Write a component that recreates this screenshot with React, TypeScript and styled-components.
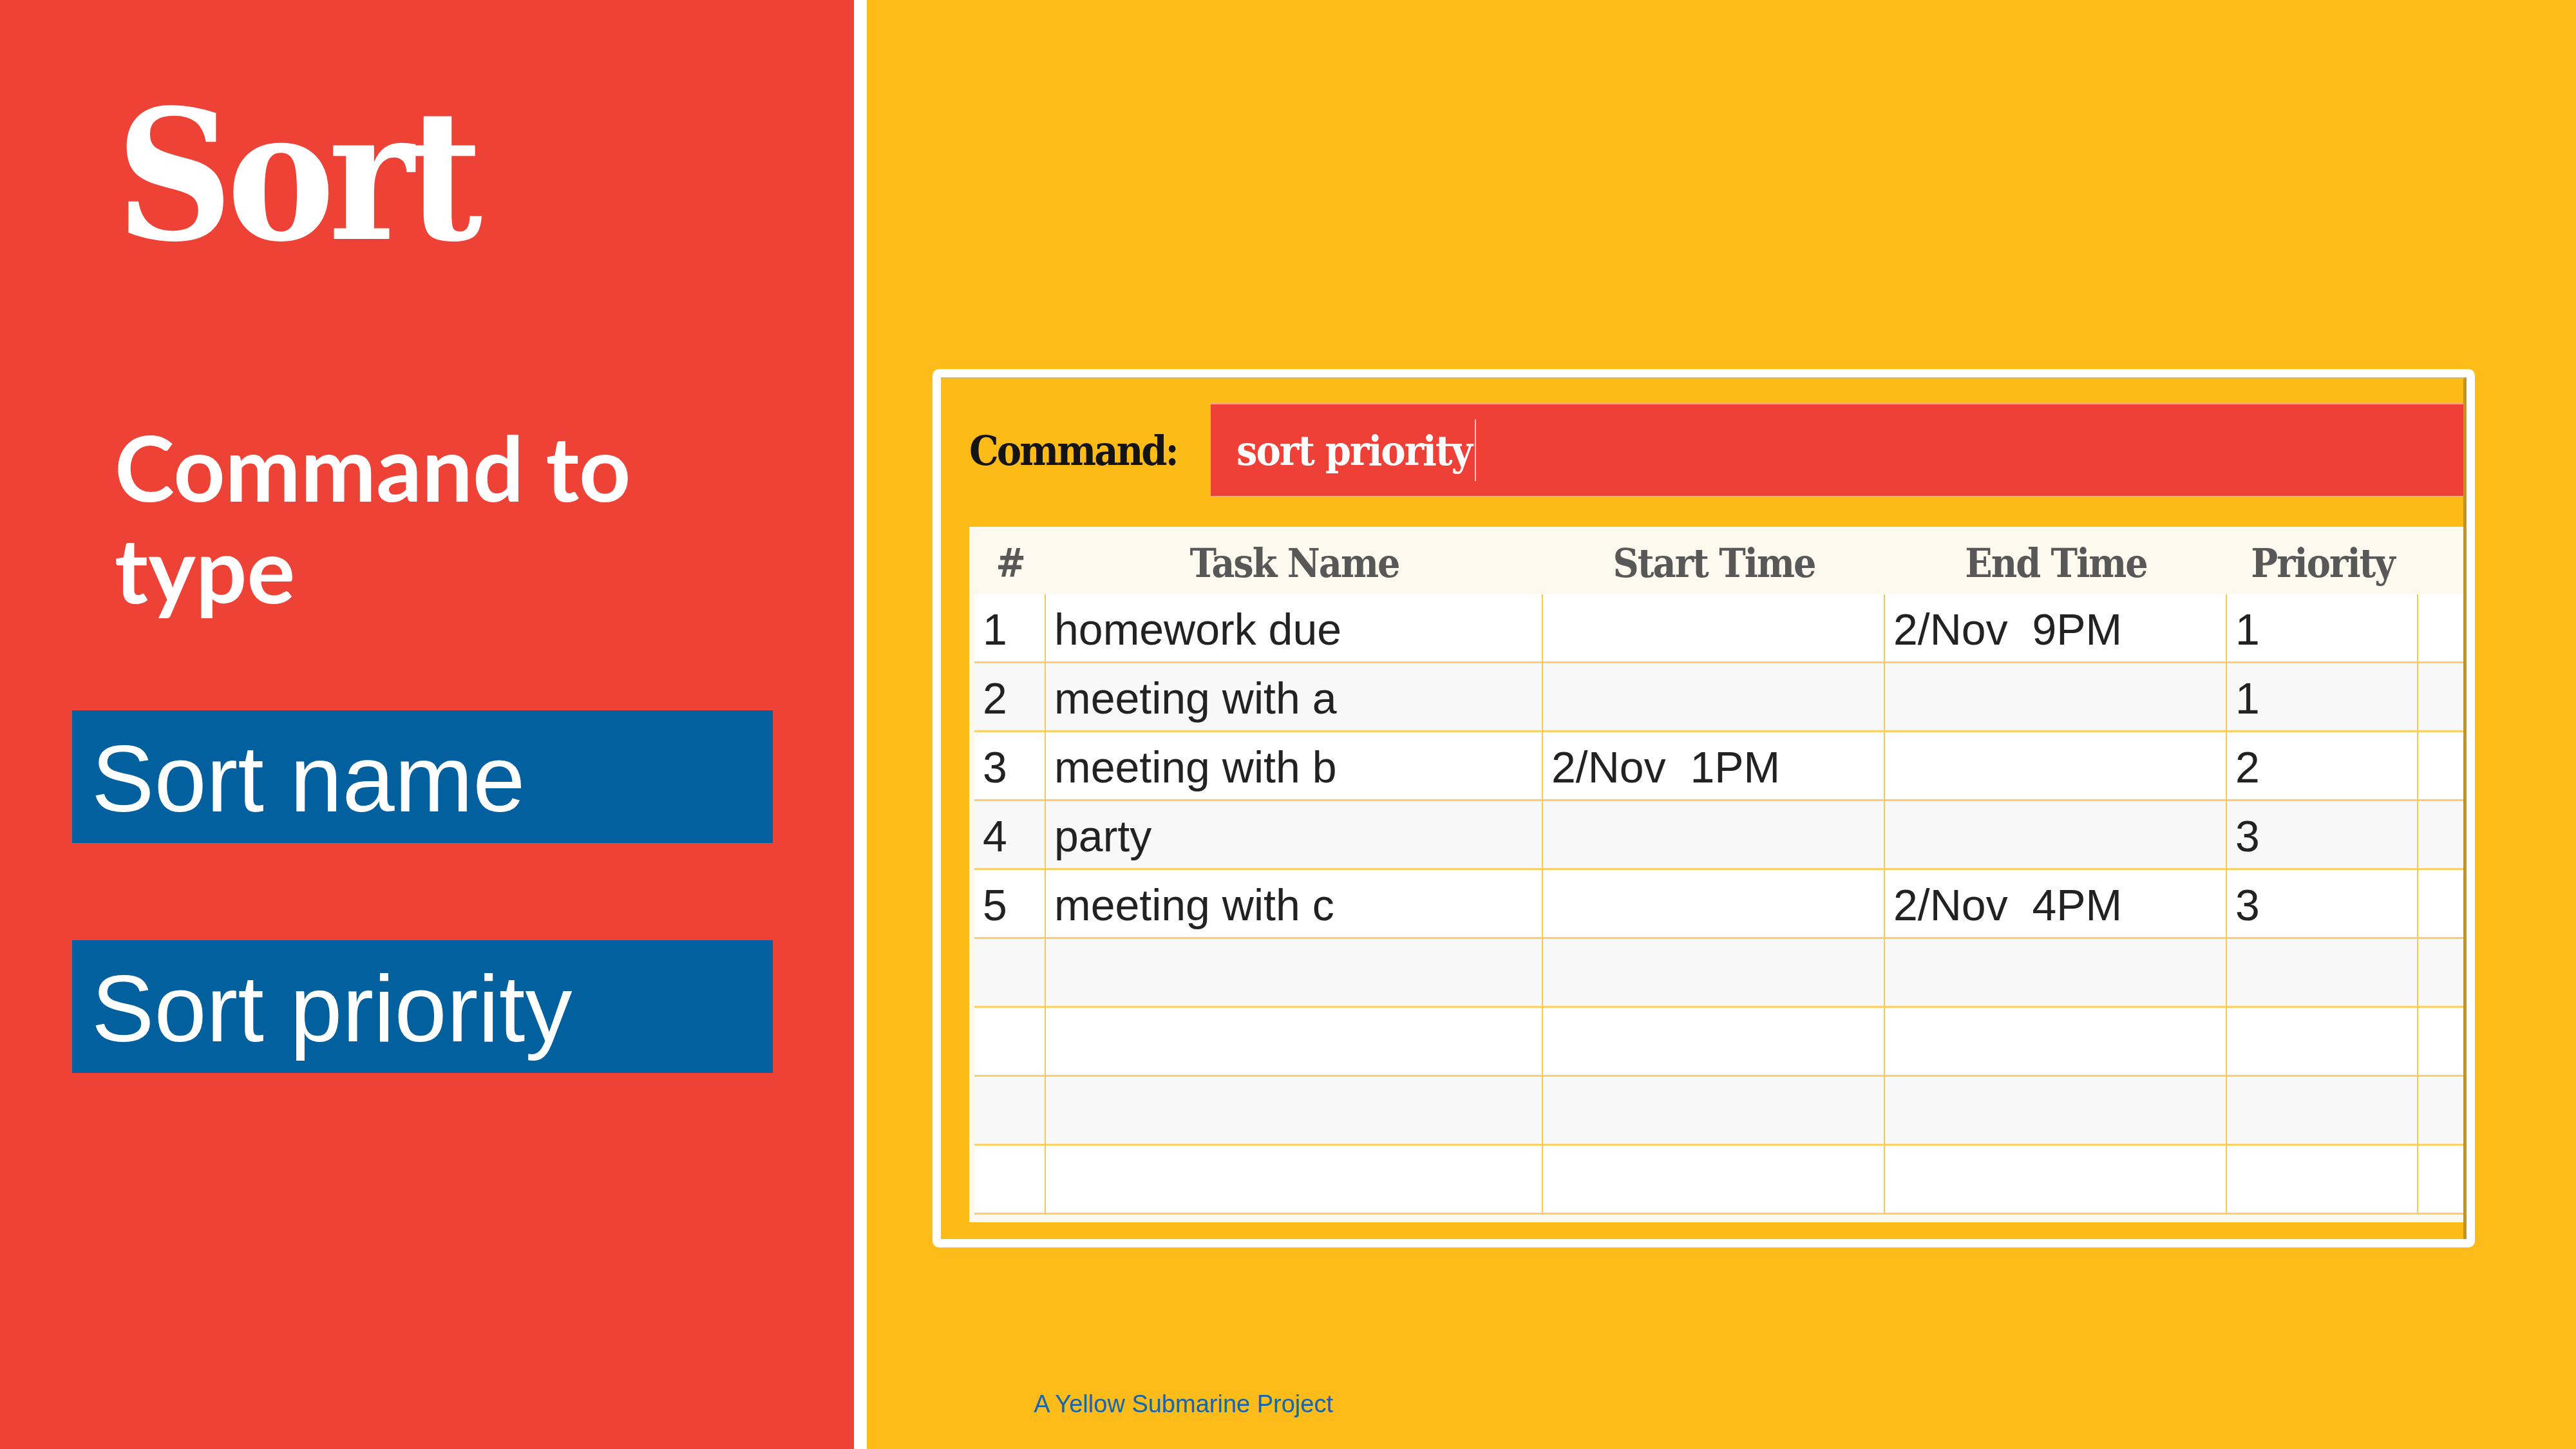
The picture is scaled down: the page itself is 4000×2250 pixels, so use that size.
import React from "react";
import styled, { createGlobalStyle } from "styled-components";

const GlobalStyle = createGlobalStyle`
  html, body { margin: 0; padding: 0; background: #fdbd19; }
  * { box-sizing: border-box; }
`;

const RED = "#ef4237";
const YELLOW = "#fdbc19";
const BLUE = "#01609d";
const SLAB = `"DejaVu Serif Condensed", "DejaVu Serif", serif`;
const SANS = `"Liberation Sans", Arial, sans-serif`;

const Root = styled.div`
  display: flex;
  width: 4000px;
  height: 2250px;
  overflow: hidden;
`;

const LeftPanel = styled.div`
  width: 1326px;
  background: ${RED};
  display: flex;
  flex-direction: column;
  padding-top: 133px;
`;

const Title = styled.h1`
  margin: 0 0 0 180px;
  font-family: ${SLAB};
  font-stretch: condensed;
  font-weight: 700;
  font-size: 280px;
  letter-spacing: -10px;
  line-height: 1;
  color: #fff;
`;

const Subtitle = styled.h2`
  margin: 233px 0 0 178px;
  font-family: Lato, "Open Sans", sans-serif;
  font-weight: 700;
  font-size: 140px;
  line-height: 158px;
  color: #fff;
  width: 900px;
`;

const CommandChip = styled.div<{ $gap: number }>`
  margin: ${(p) => p.$gap}px 0 0 112px;
  width: 1088px;
  height: 206px;
  background: ${BLUE};
  display: flex;
  align-items: center;
  padding: 8px 0 0 30px;
  font-family: ${SANS};
  font-size: 146px;
  line-height: 1;
  color: #fff;
`;

const Divider = styled.div`
  width: 20px;
  background: #fff;
`;

const RightPanel = styled.div`
  flex: 1;
  background: ${YELLOW};
  display: flex;
  flex-direction: column;
  padding: 573px 0 0 102px;
`;

const Window = styled.div`
  width: 2395px;
  height: 1364px;
  border: 13px solid #fff;
  border-radius: 10px;
  background: #fdbb17;
`;

const WindowInner = styled.div`
  height: 100%;
  display: flex;
  flex-direction: column;
  border-top: 2px solid #c2b38d;
  border-right: 5px solid #c6941c;
  padding: 38px 0 26px 44px;
`;

const CommandRow = styled.div`
  display: flex;
  align-items: center;
  height: 146px;
`;

const CommandLabel = styled.div`
  width: 374px;
  font-family: ${SLAB};
  font-stretch: condensed;
  font-weight: 700;
  font-size: 64px;
  letter-spacing: -3px;
  color: #141414;
`;

const CommandInput = styled.div`
  flex: 1;
  height: 146px;
  background: #ee4036;
  border-top: 2px solid #f7a487;
  border-bottom: 2px solid #f7a487;
  border-left: 1px solid #f7a487;
  display: flex;
  align-items: center;
  padding-left: 40px;
  font-family: ${SLAB};
  font-stretch: condensed;
  font-weight: 700;
  font-size: 64px;
  letter-spacing: -2px;
  color: #fff;
`;

const Caret = styled.span`
  display: inline-block;
  width: 2px;
  height: 96px;
  margin-left: 5px;
  background: #f7c4bc;
`;

const COLS = "111px 772px 531px 531px 297px 1fr";

const Table = styled.div`
  margin-top: 46px;
  flex: 1;
  background: #fdf9ef;
  display: flex;
  flex-direction: column;
  padding-bottom: 12px;
`;

const HeaderRow = styled.div`
  display: grid;
  grid-template-columns: ${COLS};
  height: 105px;
  padding: 8px 0 0 8px;
  align-items: center;
`;

const HeaderCell = styled.div`
  text-align: center;
  font-family: ${SLAB};
  font-stretch: condensed;
  font-weight: 700;
  font-size: 62px;
  letter-spacing: -2px;
  color: #585858;
`;

const BodyRow = styled.div<{ $alt: boolean }>`
  display: grid;
  grid-template-columns: ${COLS};
  height: 107px;
  margin-left: 8px;
  background: ${(p) => (p.$alt ? "#f8f8f8" : "#ffffff")};
  border-bottom: 3px solid #fdd067;
`;

const Cell = styled.div<{ $last?: boolean }>`
  border-right: ${(p) => (p.$last ? "none" : "2px solid #fcc94f")};
  padding: 3px 0 0 13px;
  font-family: ${SANS};
  font-size: 68px;
  line-height: 102px;
  color: #222;
  white-space: pre;
  overflow: hidden;
`;

const Footer = styled.div`
  margin: 224px 0 0 157px;
  font-family: ${SANS};
  font-size: 38px;
  line-height: 1;
  color: #1667aa;
`;

type Task = { id: string; name: string; start: string; end: string; priority: string };

const tasks: Task[] = [
  { id: "1", name: "homework due", start: "", end: "2/Nov  9PM", priority: "1" },
  { id: "2", name: "meeting with a", start: "", end: "", priority: "1" },
  { id: "3", name: "meeting with b", start: "2/Nov  1PM", end: "", priority: "2" },
  { id: "4", name: "party", start: "", end: "", priority: "3" },
  { id: "5", name: "meeting with c", start: "", end: "2/Nov  4PM", priority: "3" },
  { id: "", name: "", start: "", end: "", priority: "" },
  { id: "", name: "", start: "", end: "", priority: "" },
  { id: "", name: "", start: "", end: "", priority: "" },
  { id: "", name: "", start: "", end: "", priority: "" },
];

export default function App() {
  return (
    <>
      <GlobalStyle />
      <Root>
        <LeftPanel>
          <Title>Sort</Title>
          <Subtitle>
            Command to
            <br />
            type
          </Subtitle>
          <CommandChip $gap={141}>Sort name</CommandChip>
          <CommandChip $gap={151}>Sort priority</CommandChip>
        </LeftPanel>
        <Divider />
        <RightPanel>
          <Window>
            <WindowInner>
              <CommandRow>
                <CommandLabel>Command:</CommandLabel>
                <CommandInput>
                  sort priority
                  <Caret />
                </CommandInput>
              </CommandRow>
              <Table>
                <HeaderRow>
                  <HeaderCell>#</HeaderCell>
                  <HeaderCell>Task Name</HeaderCell>
                  <HeaderCell>Start Time</HeaderCell>
                  <HeaderCell>End Time</HeaderCell>
                  <HeaderCell>Priority</HeaderCell>
                  <HeaderCell />
                </HeaderRow>
                {tasks.map((t, i) => (
                  <BodyRow key={i} $alt={i % 2 === 1}>
                    <Cell>{t.id}</Cell>
                    <Cell>{t.name}</Cell>
                    <Cell>{t.start}</Cell>
                    <Cell>{t.end}</Cell>
                    <Cell>{t.priority}</Cell>
                    <Cell $last />
                  </BodyRow>
                ))}
              </Table>
            </WindowInner>
          </Window>
          <Footer>A Yellow Submarine Project</Footer>
        </RightPanel>
      </Root>
    </>
  );
}
